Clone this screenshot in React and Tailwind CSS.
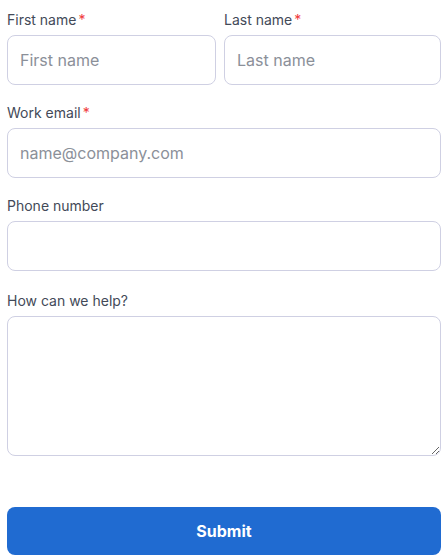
import { useState } from "react";

function Label({ text, required }) {
  return (
    <label className="block h-[22px] text-sm leading-[22px] text-[#434a58] mb-1">
      {text}
      {required && <span className="ml-[2px] text-[#f03a3a]">*</span>}
    </label>
  );
}

const inputCls =
  "block w-full h-[50px] rounded-lg border border-[#cfd0e3] bg-white px-3 text-base text-[#1f2937] placeholder:text-[#8b9099] outline-none";

export default function App() {
  const [form, setForm] = useState({ first: "", last: "", email: "", phone: "", help: "" });
  const set = (k) => (e) => setForm({ ...form, [k]: e.target.value });

  return (
    <div className="min-h-[560px] bg-white pl-[7px] pr-[5px] pt-[9px] font-['Inter',sans-serif]">
      <form className="flex flex-col gap-[17px]" onSubmit={(e) => e.preventDefault()}>
        <div className="grid grid-cols-[209px_1fr] gap-2">
          <div>
            <Label text="First name" required />
            <input className={inputCls} placeholder="First name" value={form.first} onChange={set("first")} />
          </div>
          <div>
            <Label text="Last name" required />
            <input className={inputCls} placeholder="Last name" value={form.last} onChange={set("last")} />
          </div>
        </div>
        <div>
          <Label text="Work email" required />
          <input className={inputCls} placeholder="name@company.com" value={form.email} onChange={set("email")} />
        </div>
        <div>
          <Label text="Phone number" />
          <input className={inputCls} value={form.phone} onChange={set("phone")} />
        </div>
        <div className="mt-[2px]">
          <Label text="How can we help?" />
          <textarea
            className="block w-full h-[140px] rounded-lg border border-[#cfd0e3] bg-white px-3 py-2 text-base outline-none"
            value={form.help}
            onChange={set("help")}
          />
        </div>
        <button
          type="submit"
          className="mt-[34px] h-12 w-full rounded-lg bg-[#206bd1] text-base font-bold text-white"
        >
          Submit
        </button>
      </form>
    </div>
  );
}
